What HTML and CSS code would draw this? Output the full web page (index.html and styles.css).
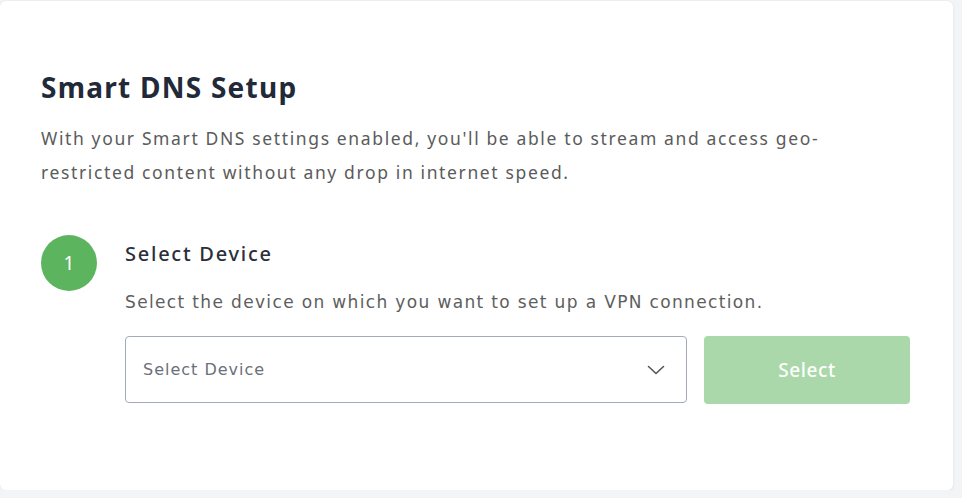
FILE: index.html
```html
<!DOCTYPE html>
<html>
<head>
<meta charset="utf-8">
<link rel="stylesheet" href="styles.css">
</head>
<body>
<div class="card">
  <h1 class="title">Smart DNS Setup</h1>
  <p class="intro">With your Smart DNS settings enabled, you'll be able to stream and access geo-restricted content without any drop in internet speed.</p>
  <div class="step">
    <div class="badge">1</div>
    <div class="step-body">
      <h2 class="step-title">Select Device</h2>
      <p class="step-desc">Select the device on which you want to set up a VPN connection.</p>
      <div class="controls">
        <div class="select">
          <span class="placeholder">Select Device</span>
          <svg class="chev" width="18" height="10" viewBox="0 0 18 10"><path d="M1.5 1.5 L9 8.5 L16.5 1.5" fill="none" stroke="#555" stroke-width="1.6" stroke-linecap="round" stroke-linejoin="round"/></svg>
        </div>
        <button class="btn">Select</button>
      </div>
    </div>
  </div>
</div>
</body>
</html>
```
FILE: styles.css
```css
html, body {
  margin: 0;
  padding: 0;
  background: #f3f4f6;
  font-family: "Noto Sans", "Open Sans", sans-serif;
}
.card {
  box-sizing: border-box;
  width: 953px;
  height: 489px;
  margin-top: 1px;
  background: #fff;
  border-radius: 6px;
  box-shadow: 0 0 0 1px #eceef1, 1px 1px 2px rgba(0,0,0,0.06);
  padding: 66px 41px 0 41px;
}
.title {
  margin: 0;
  font-size: 28px;
  font-weight: 700;
  color: #222938;
  line-height: 40px;
  letter-spacing: 1.25px;
}
.intro {
  margin: 14px 0 0 0;
  font-size: 17.5px;
  line-height: 34px;
  color: #5b5b5b;
  letter-spacing: 1.63px;
  max-width: 800px;
}
.step {
  display: flex;
  margin-top: 46px;
}
.badge {
  flex: none;
  width: 56px;
  height: 56px;
  border-radius: 50%;
  background: #5cb55e;
  color: #fff;
  font-size: 19px;
  display: flex;
  align-items: center;
  justify-content: center;
}
.step-body {
  margin-left: 28px;
  flex: 1;
}
.step-title {
  margin: 4px 0 0 0;
  font-size: 20px;
  font-weight: 500;
  color: #2b2f3a;
  line-height: 30px;
  letter-spacing: 1.75px;
}
.step-desc {
  margin: 20px 0 0 0;
  font-family: "DejaVu Sans", sans-serif;
  font-size: 17px;
  line-height: 26px;
  color: #5e5e5e;
  letter-spacing: 1.35px;
}
.controls {
  display: flex;
  margin-top: 21px;
  gap: 17px;
}
.select {
  box-sizing: border-box;
  width: 562px;
  height: 67px;
  border: 1px solid #a3abb9;
  border-radius: 4px;
  display: flex;
  align-items: center;
  justify-content: space-between;
  padding: 0 21px 0 17px;
}
.placeholder {
  font-family: "DejaVu Sans", sans-serif;
  font-size: 16px;
  color: #6b7079;
  letter-spacing: 1px;
}
.btn {
  width: 206px;
  height: 68px;
  border: none;
  border-radius: 4px;
  background: #aad8aa;
  color: #fff;
  font-family: inherit;
  font-size: 19px;
  font-weight: 500;
  letter-spacing: 0.6px;
}
```
